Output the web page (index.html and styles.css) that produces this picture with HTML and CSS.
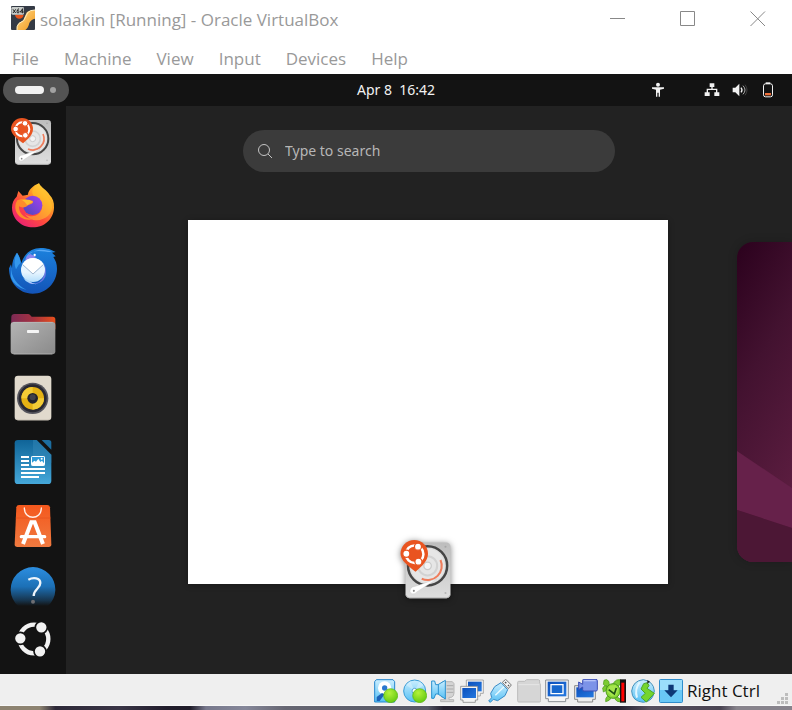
FILE: index.html
```html
<!DOCTYPE html>
<html lang="en">
<head>
<meta charset="utf-8">
<meta name="viewport" content="width=device-width, initial-scale=1">
<title>solaakin [Running] - Oracle VirtualBox</title>
<link rel="stylesheet" href="styles.css">
</head>
<body>
<svg class="defs" aria-hidden="true">
  <defs>
    <linearGradient id="gDisk" x1="0" y1="0" x2="0" y2="1"><stop offset="0" stop-color="#bdbdbd"/><stop offset="1" stop-color="#dedede"/></linearGradient>
    <linearGradient id="gFox" x1="1" y1="0" x2="0.2" y2="1"><stop offset="0" stop-color="#fff14a"/><stop offset=".35" stop-color="#ffa325"/><stop offset=".65" stop-color="#ff4a3d"/><stop offset="1" stop-color="#e81e78"/></linearGradient>
    <linearGradient id="gGlobe" x1="1" y1="0" x2="0" y2="1"><stop offset="0" stop-color="#a63ff2"/><stop offset="1" stop-color="#4a49b8"/></linearGradient>
    <linearGradient id="gBird" x1="0" y1="0" x2="0" y2="1"><stop offset="0" stop-color="#1c82dd"/><stop offset="1" stop-color="#1354b8"/></linearGradient>
    <linearGradient id="gMail" x1="0" y1="0" x2="0" y2="1"><stop offset="0" stop-color="#e4f2ff"/><stop offset=".6" stop-color="#e8f5ff"/><stop offset="1" stop-color="#b4defc"/></linearGradient>
    <linearGradient id="gTab" x1="0" y1="0" x2="1" y2="0"><stop offset="0" stop-color="#7c2a55"/><stop offset=".5" stop-color="#a53140"/><stop offset="1" stop-color="#e8501c"/></linearGradient>
    <linearGradient id="gFold" x1="0" y1="0" x2="1" y2="1"><stop offset="0" stop-color="#b4b4b4"/><stop offset="1" stop-color="#8a8a8a"/></linearGradient>
    <linearGradient id="gDoc" x1="0" y1="0" x2="0" y2="1"><stop offset="0" stop-color="#0f6498"/><stop offset="1" stop-color="#45a8da"/></linearGradient>
    <linearGradient id="gBag" x1="0" y1="0" x2="0" y2="1"><stop offset="0" stop-color="#f4581d"/><stop offset="1" stop-color="#f07a40"/></linearGradient>
    <linearGradient id="gHelp" x1="0" y1="0" x2="0" y2="1"><stop offset="0" stop-color="#2c8ee0"/><stop offset=".5" stop-color="#1c70b6"/><stop offset=".86" stop-color="#17344c"/><stop offset="1" stop-color="#131313"/></linearGradient>
    <linearGradient id="gSky" x1="0" y1="0" x2="0" y2="1"><stop offset="0" stop-color="#cbeeff"/><stop offset="1" stop-color="#56c0f4"/></linearGradient>
    <linearGradient id="gScreen" x1="0" y1="0" x2="1" y2="1"><stop offset="0" stop-color="#0b50bc"/><stop offset="1" stop-color="#2478e0"/></linearGradient>
    <radialGradient id="gLed" cx=".4" cy=".3" r=".8"><stop offset="0" stop-color="#b4f23c"/><stop offset="1" stop-color="#5cc60c"/></radialGradient>
    <linearGradient id="gGold" x1="0" y1="0" x2="1" y2="1"><stop offset="0" stop-color="#ffd98a"/><stop offset="1" stop-color="#f29a1c"/></linearGradient>
    <linearGradient id="gWall" x1="0" y1="0" x2=".3" y2="1"><stop offset="0" stop-color="#2b011d"/><stop offset=".45" stop-color="#431230"/><stop offset="1" stop-color="#5c1d40"/></linearGradient>
    <symbol id="installer" viewBox="27 36 144 144">
      <rect x="45" y="42" width="108" height="134" rx="10" fill="url(#gDisk)"/>
      <path d="M46 168q2 7 9 7h88q7 0 9-7" fill="none" stroke="#aaa" stroke-width="2"/>
      <circle cx="98" cy="98" r="47" fill="#dcdcdc" stroke="#454545" stroke-width="6"/>
      <circle cx="98" cy="98" r="41" fill="#e6e6e6"/>
      <circle cx="98" cy="98" r="23" fill="none" stroke="#d2d2d2" stroke-width="5"/>
      <circle cx="98" cy="98" r="9" fill="#f4f4f4" stroke="#cacaca" stroke-width="3"/>
      <path d="M129 84A34 34 0 0 1 84 129" fill="none" stroke="#ef7d5c" stroke-width="5"/>
      <path d="M121 129L73 160q-5 7-13 5-7-5-3-12 4-6 12-6z" fill="#fff" stroke="#c4c4c4" stroke-width="1"/>
      <circle cx="65" cy="158" r="2.5" fill="#888"/>
      <circle cx="141" cy="52" r="2.5" fill="#a6a6a6"/><circle cx="141" cy="163" r="2.5" fill="#b6b6b6"/>
      <path d="M66 36a33 33 0 0 1 33 33c0 16-13 29-30 43C50 98 33 84 33 69A33 33 0 0 1 66 36z" fill="#e95420"/>
      <circle cx="67" cy="70" r="21" fill="none" stroke="#fff" stroke-width="6"/>
      <g fill="#fff" stroke="#e95420" stroke-width="3"><circle cx="47" cy="69" r="8.500"/><circle cx="75" cy="52" r="8.500"/><circle cx="76" cy="88" r="8.500"/></g>
    </symbol>
  </defs>
</svg>

<header class="titlebar">
  <svg class="app-icon" viewBox="0 0 72 72" aria-hidden="true">
    <rect width="72" height="72" rx="3" fill="#343a45"/>
    <path d="M72 12v26q-12 2-17 13-3 15-12 21H18q-3-14 7-22l12-7q5-14 11-25 8-6 24-6z" fill="url(#gGold)"/>
    <path d="M72 12q-16 0-22 8L38 44 24 52q-8 8-6 20" fill="none" stroke="#fff0c4" stroke-width="3"/>
    <path d="M12 26h26q-2 12-13 12T12 26z" fill="#e8531a"/>
    <rect x="1" y="3" width="38" height="23" rx="4" fill="#c7cbc9"/>
    <path d="M6 10l8 11m0-11l-8 11M24 8q-6 2-6 9 0 4 3 4t3-4-5-3M35 22V8l-7 10h10" fill="none" stroke="#222" stroke-width="3"/>
  </svg>
  <h1 class="title">solaakin [Running] - Oracle VirtualBox</h1>
  <div class="window-buttons">
    <button type="button" aria-label="Minimize"><svg viewBox="0 0 16 16"><path d="M0 7.500h15"/></svg></button>
    <button type="button" aria-label="Maximize"><svg viewBox="0 0 16 16"><path d="M.5.5h14v14H.5z"/></svg></button>
    <button type="button" aria-label="Close"><svg viewBox="0 0 16 16"><path d="M.5.5l14.500 14.500M15 .5L.5 15"/></svg></button>
  </div>
</header>

<nav class="menubar" aria-label="Machine menu">
  <button type="button">File</button>
  <button type="button">Machine</button>
  <button type="button">View</button>
  <button type="button">Input</button>
  <button type="button">Devices</button>
  <button type="button">Help</button>
</nav>

<main class="guest">
  <div class="panel">
    <button type="button" class="activities" aria-label="Activities"><span class="dash"></span><span class="dot"></span></button>
    <button type="button" class="clock">Apr 8 &nbsp;16:42</button>
    <div class="indicators">
      <button type="button" class="access" aria-label="Accessibility">
        <svg class="tray" viewBox="0 0 48 48"><circle cx="24" cy="8" r="6" fill="#f2f2f2"/><path d="M6 16h36v4l-12 3v21h-4V32h-4v12h-4V23L6 20z" fill="#f2f2f2"/></svg>
      </button>
      <button type="button" class="system" aria-label="System menu">
        <svg class="tray" viewBox="0 0 48 48"><path d="M17 4h14v11h-5v5h14v11h6v11H31V31h5v-7H12v7h5v11H2V31h6V20h14v-5h-5z" fill="#f2f2f2"/></svg>
        <svg class="tray" viewBox="0 0 48 48"><path d="M2 17h8L22 5v38L10 31H2z" fill="#f2f2f2"/><path d="M27 17q6 7 0 14" fill="none" stroke="#f2f2f2" stroke-width="4"/><path d="M33 11q12 13 0 26" fill="none" stroke="#aaa" stroke-width="3"/><path d="M39 8q12 16 0 32" fill="none" stroke="#555" stroke-width="2"/></svg>
        <svg class="tray" viewBox="0 0 48 48"><path d="M17 1h14v5H17z" fill="#f2f2f2"/><rect x="10.500" y="5.500" width="27" height="39" rx="6" fill="none" stroke="#f2f2f2" stroke-width="3"/><path d="M15 33h18v7H15z" fill="#f0703a"/></svg>
      </button>
    </div>
  </div>

  <div class="desktop">
    <nav class="dock" aria-label="Dock">
      <div class="favorites">
        <button type="button" aria-label="Install Ubuntu"><svg><use href="#installer"/></svg></button>
        <button type="button" aria-label="Firefox">
          <svg viewBox="27 228 144 144">
            <path d="M117 232c7 14 24 20 32 35 9 9 14 22 13 38-1 34-29 59-63 59s-63-25-63-59c0-14 5-25 14-33l5-17 13 14 16-3c0-12 15-28 33-34z" fill="url(#gFox)"/>
            <path d="M117 232c-18 12-26 25-16 38 17 8 29 20 25 37-5 24-34 31-52 16 28 40 87 12 82-24-3-21-30-42-39-67z" fill="#ffc62d" opacity=".55"/>
            <circle cx="98" cy="298" r="29" fill="url(#gGlobe)"/>
            <path d="M52 283c13-5 17-5 27-2 10 4 22-1 20 8-2 7-13 6-18 11-8 7-18 4-24 1-1 24 22 44 50 34-39 22-76-19-55-52z" fill="#ff8c2b"/>
            <path d="M66 282q21-4 33 6-9 3-17 10-8-12-16-16z" fill="#ffbd2e"/>
          </svg>
        </button>
        <button type="button" aria-label="Thunderbird">
          <svg viewBox="27 30 144 144">
            <path d="M51 50c9 14 12 25 13 32C72 52 95 36 122 36c20 0 32 5 45 12l-11 2 11 11-7 2c7 11 11 20 11 35 0 42-32 75-73 75-42 0-71-33-71-76l6-12 3 12c0-21 6-35 15-47z" fill="url(#gBird)"/>
            <path d="M33 90q0 48 47 72-38-10-47-37zM51 50q-13 26-3 50 6-14 14-20-1-15-11-30z" fill="#3498ed"/>
            <path d="M77 70c3-13 10-20 21-23 22-6 40 2 58 1-14-6-38-11-58 0-10 5-17 13-21 22z" fill="#5aa9f5"/>
            <path d="M76 76q0-16 15-22l18 9q-14 4-18 10z" fill="#8b86ef"/>
            <circle cx="104" cy="57" r="3.500" fill="#fff"/>
            <path d="M132 82q8 41-15 57-17 8-29-3-5 6 4 8 34 2 44-22 6-18-4-40z" fill="#6b78e3"/>
            <circle cx="99" cy="102" r="36" fill="url(#gMail)"/>
            <path d="M88 134q8 9 22 11-30-1-40-19z" fill="#a9d4fb"/>
            <path d="M68 84q10-17 31-18 21 1 31 18l-31 29z" fill="#fff"/>
            <path d="M68 86l31 28 31-28" fill="none" stroke="#a3bad2" stroke-width="3"/>
          </svg>
        </button>
        <button type="button" aria-label="Files">
          <svg viewBox="27 222 144 144">
            <path d="M34 242q1-8 9-8h41q4 0 7 4l4 4h63q8 0 8 8v30H33z" fill="url(#gTab)"/>
            <rect x="32" y="258" width="134" height="97" rx="9" fill="url(#gFold)"/>
            <path d="M40 259h118M41 354h116" stroke="#c0c0c0" stroke-width="2"/>
            <rect x="81" y="282" width="36" height="9" rx="2" fill="#f4f4f4"/>
          </svg>
        </button>
        <button type="button" aria-label="Rhythmbox">
          <svg viewBox="27 24 144 144">
            <rect x="44" y="29" width="110" height="134" rx="10" fill="#e1dacd"/>
            <path d="M47 158q3 4 8 4h88q5 0 8-4" fill="none" stroke="#b9b2a6" stroke-width="2"/>
            <circle cx="98" cy="97" r="47" fill="#55555d"/><circle cx="98" cy="97" r="42" fill="#292932"/>
            <circle cx="98" cy="97" r="34" fill="#e5b214"/><path d="M98 63a34 34 0 0 0-34 34h34zM98 131a34 34 0 0 0 34-34H98z" fill="#f3cc36"/>
            <circle cx="98" cy="97" r="16" fill="#24242c"/><circle cx="98" cy="94" r="9" fill="#41414a"/>
          </svg>
        </button>
        <button type="button" aria-label="LibreOffice Writer">
          <svg viewBox="27 216 144 144">
            <path d="M54 222h56l44 44v78q0 10-10 10H54q-10 0-10-10V232q0-10 10-10z" fill="url(#gDoc)"/>
            <path d="M99 222h11l44 44v24H99z" fill="#3387b7" opacity=".5"/>
            <path d="M125 222h21q8 0 8 8v21z" fill="#1c6ea1"/>
            <path d="M63 273h24M63 285h24M63 297h24M63 309h72M63 321h72M63 333h54" stroke="#fff" stroke-width="6"/>
            <rect x="94.500" y="271.500" width="39" height="27" rx="2" fill="#2e9bd8" stroke="#fff" stroke-width="3"/>
            <path d="M96 298v-8l7-6 5 3 7-9 6 10 5-4 6 8v6z" fill="#fff"/><circle cx="125" cy="278" r="3" fill="#fff"/>
          </svg>
        </button>
        <button type="button" aria-label="App Center">
          <svg viewBox="27 18 144 144">
            <path d="M57 27h85q7 0 8 7l4 111q0 8-8 8H52q-8 0-8-8l5-111q1-7 8-7z" fill="url(#gBag)"/>
            <path d="M47 66h105" stroke="#e5501d" stroke-width="2"/>
            <path d="M73 36c0 37 51 37 51 0" fill="none" stroke="#fff0e8" stroke-width="4" stroke-linecap="round"/>
            <path d="M69 144l25-65h10l25 65" fill="none" stroke="#fff" stroke-width="12"/>
            <path d="M64 122h70" stroke="#fff" stroke-width="10" stroke-linecap="round"/>
          </svg>
        </button>
        <button type="button" class="fading" aria-label="Help">
          <svg viewBox="27 210 144 120">
            <path d="M54 330a67 67 0 1 1 90 0z" fill="url(#gHelp)"/>
            <path d="M85 251c15-8 36-6 36 10 0 17-20 18-20 39" fill="none" stroke="#eef5fb" stroke-width="7"/>
            <circle cx="99" cy="317" r="6" fill="#6e6e72"/>
          </svg>
        </button>
      </div>
      <button type="button" class="show-apps" aria-label="Show apps">
        <svg viewBox="40 370 114 114">
          <circle cx="100" cy="427" r="43" fill="none" stroke="#f2f2f2" stroke-width="13"/>
          <g fill="#f2f2f2" stroke="#131313" stroke-width="5"><circle cx="59" cy="425" r="18"/><circle cx="122" cy="392" r="18"/><circle cx="118" cy="464" r="18"/></g>
        </svg>
      </button>
    </nav>

    <section class="overview" aria-label="Overview">
      <label class="search">
        <svg viewBox="0 0 16 16" aria-hidden="true"><circle cx="7" cy="7" r="5.500"/><path d="M11 11l4 4"/></svg>
        <input type="text" placeholder="Type to search" aria-label="Search">
      </label>
      <div class="workspaces">
        <div class="window">
          <svg class="window-icon" role="img" aria-label="Install Ubuntu"><use href="#installer"/></svg>
        </div>
        <svg class="next-workspace" viewBox="0 0 55 320" preserveAspectRatio="none" aria-hidden="true">
          <path d="M0 0h55v320H0z" fill="url(#gWall)"/>
          <path d="M0 209l55 37v40L0 268z" fill="#66214a"/>
          <path d="M0 268l55 18v34H0z" fill="#4c1735"/>
        </svg>
      </div>
    </section>
  </div>
</main>

<footer class="statusbar">
  <div class="status-icons">
    <svg viewBox="0 0 72 72"><path d="M7 2h50l5 6v61H2V8z" fill="url(#gSky)" stroke="#2587cf" stroke-width="3"/><circle cx="32" cy="27" r="20" fill="#fff"/><circle cx="32" cy="27" r="8" fill="#2a78cf"/><path d="M24 42l8 4-15 20H8V54z" fill="#1c62b8"/><circle cx="50" cy="50" r="21" fill="url(#gLed)" stroke="#55b30d" stroke-width="2"/></svg>
    <svg viewBox="0 0 72 72"><circle cx="35" cy="36" r="33" fill="url(#gSky)" stroke="#3a9cd6" stroke-width="3"/><path d="M35 36L9 18l12-12zM35 36l27-17-12-13z" fill="#e9f8ff" opacity=".4"/><circle cx="35" cy="36" r="8" fill="#fff" stroke="#59a8d6" stroke-width="3"/><circle cx="50" cy="50" r="21" fill="url(#gLed)" stroke="#55b30d" stroke-width="2"/></svg>
    <svg viewBox="0 0 72 72"><path d="M34 8h30l5 6v28q0 10-8 13h-7v7h14v6H29v-6h14v-7H32" fill="#d4d4d4" stroke="#b6b6b6" stroke-width="3"/><path d="M47 20h20M47 30h20M47 40h20" stroke="#aaa" stroke-width="3"/><path d="M2 6h9l3 11h7L43 4v56L21 45h-7L9 58H2z" fill="url(#gSky)" stroke="#2991cf" stroke-width="3"/><path d="M22 17v28" stroke="#2991cf" stroke-width="3"/></svg>
    <svg viewBox="0 0 72 72"><path d="M19 3h51v40h-9v8H28v-8h-9z" fill="#f4f4f4" stroke="#888" stroke-width="2"/><path d="M24 8h41v29H24z" fill="url(#gScreen)"/><path d="M2 22h51v41h-7v7H9v-7H2z" fill="#f4f4f4" stroke="#777" stroke-width="2"/><path d="M7 27h41v30H7z" fill="url(#gScreen)"/></svg>
    <svg viewBox="0 0 72 72"><path d="M43 10l10-9 17 17-9 11z" fill="#f5f5f5" stroke="#777" stroke-width="3"/><path d="M51 9l4 4M60 18l3 3" stroke="#555" stroke-width="4"/><path d="M39 11l20 21-8 18-22 15-13-4-9 9-5-4 9-10-3-13 12-20z" fill="url(#gSky)" stroke="#388bc6" stroke-width="3"/><path d="M22 49l26-26" stroke="#eafaff" stroke-width="4"/></svg>
    <svg viewBox="0 0 72 72"><path d="M2 10q0-3 3-3h18l6-5h35q4 0 4 4v7q3 1 3 4v48q0 4-4 4H5q-3 0-3-4z" fill="#d6d6d6" stroke="#bcbcbc" stroke-width="3"/><path d="M4 17h62" stroke="#e5e5e5" stroke-width="3"/></svg>
    <svg viewBox="0 0 72 72"><path d="M2 3h68v56h-8v9H10v-9H2z" fill="#f5f5f5" stroke="#8a8f94" stroke-width="3"/><path d="M8 8h56v44H8z" fill="url(#gScreen)"/><path d="M18 17h36v27H18z" fill="#1768ce" stroke="#fff" stroke-width="4"/></svg>
    <svg viewBox="0 0 72 72"><path d="M2 20h62v41h-8v8H11v-8H2z" fill="#eee" stroke="#888" stroke-width="3"/><path d="M7 25h52v30H7z" fill="url(#gScreen)"/><path d="M14 9l12 7V4q0-3 3-3h37q4 0 4 4v27q0 4-4 4H30q-4 0-4-4v-8l-12 8z" fill="#7c93e8" stroke="#3c4eb5" stroke-width="3"/><path d="M29 5h36" stroke="#b4c2f8" stroke-width="4"/></svg>
    <svg viewBox="0 0 72 72">
      <g fill="#7ccb32" stroke="#4c9a1c" stroke-width="2"><path d="M6 4q9-6 15 4l1 14-9 2-9-8z"/><path d="M34 12q9-13 21-10v12q-5 10-13 10z"/><path d="M14 20q-10-1-12 8l2 11 11-6z"/><path d="M18 50q-9 6-7 18 12-2 17-12z"/><path d="M42 52l13 8v9q-11 0-17-10z"/></g>
      <ellipse cx="33" cy="36" rx="21" ry="22" fill="#8ad936" stroke="#4c9a1c" stroke-width="3"/>
      <path d="M23 20l18-2 8 14-6 16-14 4-13-14z" fill="#a5e64c"/>
      <path d="M20 32l17 13 6-18" fill="none" stroke="#1d4f14" stroke-width="5"/>
      <path d="M54 1h18v70H54z" fill="#111"/><path d="M58 11h9v56h-9z" fill="#f00"/>
    </svg>
    <svg viewBox="0 0 72 72"><path d="M37 2q31 5 33 34-3 31-33 34Q3 67 2 36 6 5 37 2z" fill="url(#gSky)" stroke="#4392bd" stroke-width="3"/><path d="M26 10q-16 20-8 46" fill="none" stroke="#e2f6ff" stroke-width="6"/><path d="M38 14l11-3 5 9-6 8 22 15-24 26-16-14 13-12-13-13z" fill="#75d52d" stroke="#4ba528" stroke-width="3"/><path d="M49 3l8 5-8 6z" fill="#222"/></svg>
    <svg viewBox="0 0 72 72"><rect x="1.500" y="1.500" width="69" height="69" rx="3" fill="#69c7f6" stroke="#2f8dcc" stroke-width="3"/><path d="M3 3h66v30H3z" fill="#9bddfb"/><path d="M28 17h16v17h12L36 55 16 34h12z" fill="#0d3776"/></svg>
  </div>
  <span class="host-key">Right Ctrl</span>
  <svg class="grip" viewBox="0 0 12 12" aria-hidden="true"><path d="M8 0h3v3H8zM4 4h3v3H4zM8 4h3v3H8zM0 8h3v3H0zM4 8h3v3H4zM8 8h3v3H8z" fill="#bdbdbd"/></svg>
</footer>
<div class="backdrop"></div>
</body>
</html>
```
FILE: styles.css
```css
* {
  box-sizing: border-box;
}

body {
  margin: 0;
  min-height: 100vh;
  display: flex;
  flex-direction: column;
  background: #fff;
  font-family: "Open Sans", "Noto Sans", sans-serif;
  font-size: 17px;
  overflow-x: hidden;
}

button {
  margin: 0;
  padding: 0;
  border: 0;
  background: none;
  color: inherit;
  font: inherit;
}

svg {
  display: block;
}

.defs {
  position: absolute;
  width: 0;
  height: 0;
}

/* Host window */

.titlebar {
  display: flex;
  align-items: center;
  height: 40px;
  padding: 0 26px 0 11px;
  color: #999;
}

.app-icon {
  width: 24px;
  height: 24px;
  margin-bottom: 4px;
}

.title {
  margin: 0 0 0 5px;
  font-size: 17px;
  font-weight: 400;
  line-height: 24px;
}

.window-buttons {
  display: flex;
  gap: 54px;
  margin: 0 0 2px auto;
}

.window-buttons svg {
  width: 16px;
  height: 16px;
  fill: none;
  stroke: #888;
}

.menubar {
  display: flex;
  gap: 25px;
  height: 34px;
  padding: 2px 12px 0;
  color: #999;
}

/* Guest screen */

.guest {
  flex: 1;
  display: flex;
  flex-direction: column;
  background: #222;
  color: #f2f2f2;
  font-family: "Noto Sans", "Open Sans", sans-serif;
  font-size: 14px;
}

.panel {
  display: grid;
  grid-template-columns: 1fr auto 1fr;
  align-items: center;
  height: 32px;
  padding: 0 3px;
  background: #131313;
}

.clock {
  padding-bottom: 2px;
}

.activities {
  display: flex;
  align-items: center;
  gap: 6px;
  width: 66px;
  height: 26px;
  padding-left: 12px;
  border-radius: 13px;
  background: #535353;
}

.dash {
  width: 29px;
  height: 8px;
  border-radius: 4px;
  background: #f2f2f2;
}

.dot {
  width: 6px;
  height: 6px;
  border-radius: 3px;
  background: #a2a2a2;
}

.indicators,
.system {
  display: flex;
  align-items: center;
}

.indicators {
  justify-content: flex-end;
  gap: 38px;
  padding-right: 13px;
}

.system {
  gap: 12px;
}

.tray {
  width: 16px;
  height: 16px;
}

.desktop {
  flex: 1;
  display: flex;
}

.dock {
  display: flex;
  flex-direction: column;
  align-items: center;
  width: 66px;
  padding: 12px 0 16px;
  background: #131313;
}

.favorites {
  display: flex;
  flex-direction: column;
  gap: 16px;
}

.favorites svg {
  width: 48px;
  height: 48px;
}

.favorites .fading svg {
  height: 40px;
}

.show-apps {
  margin-top: auto;
}

.show-apps svg {
  width: 38px;
  height: 38px;
}

.overview {
  flex: 1;
  min-width: 0;
  display: flex;
  flex-direction: column;
  padding: 24px 0 90px;
}

.search {
  display: flex;
  align-items: center;
  align-self: center;
  gap: 12px;
  width: 372px;
  max-width: 90%;
  height: 42px;
  padding: 0 14px;
  border-radius: 21px;
  background: #3b3b3b;
}

.search svg {
  flex: none;
  width: 16px;
  height: 16px;
  fill: none;
  stroke: #c4c4c4;
}

.search input {
  flex: 1;
  min-width: 0;
  padding: 0 0 2px;
  border: 0;
  outline: 0;
  background: none;
  color: #f2f2f2;
  font: inherit;
}

.search input::placeholder {
  color: #b6b6b6;
  opacity: 1;
}

.workspaces {
  flex: 1;
  display: grid;
  grid-template-columns: minmax(0, 1fr) 55px;
  column-gap: 69px;
  margin-top: 48px;
  padding-left: 122px;
}

.window {
  position: relative;
  background: #fff;
  box-shadow: 0 1px 6px rgba(0, 0, 0, 0.3);
}

.window-icon {
  position: absolute;
  bottom: -16px;
  left: calc(50% - 30px);
  width: 60px;
  height: 60px;
  filter: drop-shadow(0 1px 3px rgba(0, 0, 0, 0.5));
}

.next-workspace {
  width: 100%;
  height: calc(100% - 44px);
  align-self: center;
  border-radius: 16px 0 0 16px;
  box-shadow: 0 0 10px rgba(0, 0, 0, 0.2);
}

/* Host status bar */

.statusbar {
  display: flex;
  align-items: center;
  justify-content: flex-end;
  height: 32px;
  padding: 2px 3px 0 12px;
  border-bottom: 1px solid #f8f8f8;
  background: #efefef;
  color: #111;
}

.status-icons {
  display: flex;
  justify-content: space-between;
  width: 309px;
}

.status-icons svg {
  width: 24px;
  height: 24px;
}

.host-key {
  width: 94px;
  padding-left: 4px;
  white-space: nowrap;
}

.grip {
  align-self: flex-end;
  width: 12px;
  height: 12px;
}

.backdrop {
  height: 4px;
  background: linear-gradient(90deg, #8d8371 0, #8d8371 5%, #2d2938 7%, #3a3546 15%, #211d2c 21%, #1f1c29 24%, #77788c 26%, #858799 31%, #666672 36%, #565866 54%, #25212f 56%, #25212f 78%, #56505f 82%, #4a4452 91%, #87838c 93%, #87838c 100%);
}
```
